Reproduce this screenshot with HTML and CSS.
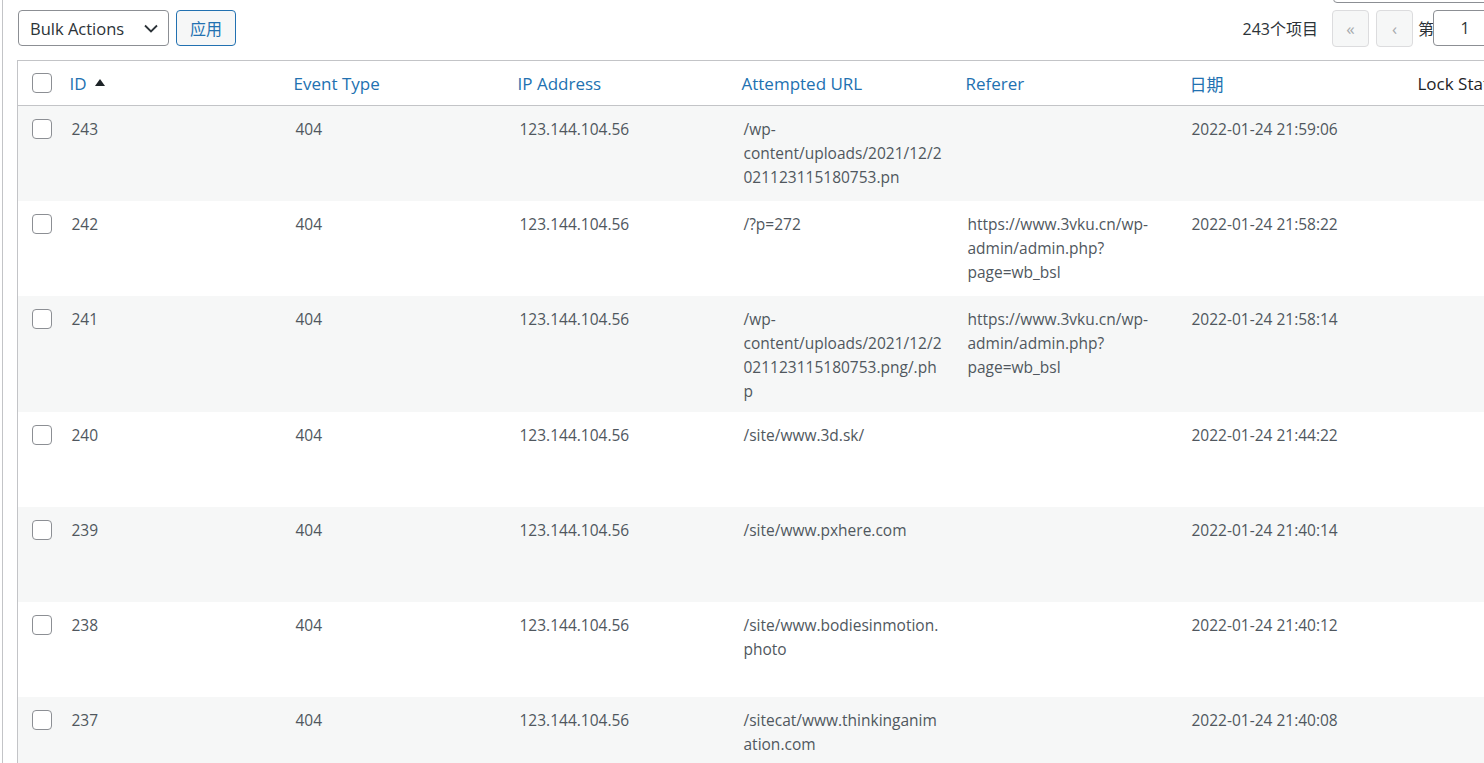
FILE: index.html
```html
<!DOCTYPE html>
<html>
<head>
<meta charset="utf-8">
<title>Security Log</title>
<link rel="stylesheet" href="styles.css">
</head>
<body>
<div class="wrap">

<div class="search-row">
  <div class="search-box"></div>
</div>

<div class="tablenav">
  <div class="bulkactions">
    <div class="select">Bulk Actions
      <svg width="14" height="9" viewBox="0 0 14 9"><path d="M1 1.5 L7 7.5 L13 1.5" fill="none" stroke="#2c3338" stroke-width="1.8"/></svg>
    </div>
    <button class="button">应用</button>
  </div>
  <div class="pages">
    <span class="count">243个项目</span>
    <span class="pbtn">&laquo;</span>
    <span class="pbtn">&lsaquo;</span>
    <span class="of">第</span>
    <span class="current">1</span>
  </div>
</div>

<table class="logs">
  <colgroup>
    <col class="c-check">
    <col class="c-col"><col class="c-col"><col class="c-col">
    <col class="c-col"><col class="c-col"><col class="c-col">
    <col class="c-last">
  </colgroup>
  <thead>
    <tr>
      <th class="check"><span class="cb"></span></th>
      <th class="sortable"><a>ID</a><span class="arrow"></span></th>
      <th class="sortable"><a>Event Type</a></th>
      <th class="sortable"><a>IP Address</a></th>
      <th class="sortable"><a>Attempted URL</a></th>
      <th class="sortable"><a>Referer</a></th>
      <th class="sortable"><a>日期</a></th>
      <th class="plain">Lock Status</th>
    </tr>
  </thead>
  <tbody>
    <tr class="alt">
      <td class="check"><span class="cb"></span></td>
      <td>243</td><td>404</td><td>123.144.104.56</td>
      <td class="url">/wp-content/uploads/2021/12/2021123115180753.pn</td>
      <td class="url"></td>
      <td>2022-01-24 21:59:06</td><td></td>
    </tr>
    <tr>
      <td class="check"><span class="cb"></span></td>
      <td>242</td><td>404</td><td>123.144.104.56</td>
      <td class="url">/?p=272</td>
      <td class="url">https://www.3vku.cn/wp-admin/admin.php?page=wb_bsl</td>
      <td>2022-01-24 21:58:22</td><td></td>
    </tr>
    <tr class="alt">
      <td class="check"><span class="cb"></span></td>
      <td>241</td><td>404</td><td>123.144.104.56</td>
      <td class="url">/wp-content/uploads/2021/12/2021123115180753.png/.php</td>
      <td class="url">https://www.3vku.cn/wp-admin/admin.php?page=wb_bsl</td>
      <td>2022-01-24 21:58:14</td><td></td>
    </tr>
    <tr>
      <td class="check"><span class="cb"></span></td>
      <td>240</td><td>404</td><td>123.144.104.56</td>
      <td class="url">/site/www.3d.sk/</td>
      <td class="url"></td>
      <td>2022-01-24 21:44:22</td><td></td>
    </tr>
    <tr class="alt">
      <td class="check"><span class="cb"></span></td>
      <td>239</td><td>404</td><td>123.144.104.56</td>
      <td class="url">/site/www.pxhere.com</td>
      <td class="url"></td>
      <td>2022-01-24 21:40:14</td><td></td>
    </tr>
    <tr>
      <td class="check"><span class="cb"></span></td>
      <td>238</td><td>404</td><td>123.144.104.56</td>
      <td class="url">/site/www.bodiesinmotion.photo</td>
      <td class="url"></td>
      <td>2022-01-24 21:40:12</td><td></td>
    </tr>
    <tr class="alt">
      <td class="check"><span class="cb"></span></td>
      <td>237</td><td>404</td><td>123.144.104.56</td>
      <td class="url">/sitecat/www.thinkinganimation.com</td>
      <td class="url"></td>
      <td>2022-01-24 21:40:08</td><td></td>
    </tr>
  </tbody>
</table>

</div>
</body>
</html>
```

FILE: styles.css
```css
html, body {
  margin: 0;
  padding: 0;
  background: #fff;
  overflow: hidden;
}
body {
  font-family: "Open Sans", "Noto Sans CJK SC", sans-serif;
  color: #50575e;
}
.wrap {
  width: 1600px;
  margin-left: 2px;
  border-left: 1px solid #c3c4c7;
  padding-left: 14px;
  min-height: 800px;
}
.search-row {
  width: 1480px;
  height: 10px;
  display: flex;
  justify-content: flex-end;
}
.search-box {
  width: 162px;
  height: 34px;
  margin-top: -33px;
  border: 1px solid #8c8f94;
  border-radius: 4px;
}
.tablenav {
  width: 1480px;
  display: flex;
  justify-content: space-between;
  align-items: center;
  height: 36px;
  margin-bottom: 14px;
}
.bulkactions {
  display: flex;
  gap: 7px;
  margin-left: 1px;
}
.select {
  box-sizing: border-box;
  width: 151px;
  height: 36px;
  border: 1px solid #8c8f94;
  border-radius: 4px;
  padding: 0 10px 0 11px;
  display: flex;
  align-items: center;
  justify-content: space-between;
  font-size: 16.5px;
  color: #2c3338;
}
.button {
  box-sizing: border-box;
  height: 36px;
  width: 60px;
  border: 1px solid #2271b1;
  border-radius: 4px;
  background: #f6f7f7;
  color: #2271b1;
  font-family: "Noto Sans CJK SC", sans-serif;
  font-size: 16px;
  padding: 0;
}
.pages {
  display: flex;
  align-items: center;
  font-size: 16px;
  color: #2c3338;
}
.count {
  font-family: "Open Sans", "Noto Sans CJK SC", sans-serif;
  margin-right: 14px;
}
.pbtn {
  box-sizing: border-box;
  width: 37px;
  height: 37px;
  border: 1px solid #dcdcde;
  border-radius: 4px;
  background: #f6f7f7;
  color: #a7aaad;
  display: flex;
  align-items: center;
  justify-content: center;
  margin-right: 7px;
  font-size: 17px;
}
.pbtn + .pbtn {
  margin-right: 5px;
}
.of {
  font-family: "Noto Sans CJK SC", sans-serif;
}
.current {
  box-sizing: border-box;
  width: 64px;
  height: 36px;
  margin-left: -1px;
  border: 1px solid #8c8f94;
  border-radius: 4px;
  display: flex;
  align-items: center;
  justify-content: center;
  color: #2c3338;
  font-size: 16px;
}
table.logs {
  table-layout: fixed;
  width: 1560px;
  border-collapse: collapse;
  border: 1px solid #c3c4c7;
}
col.c-check { width: 42px; }
col.c-col { width: 224px; }
col.c-last { width: 174px; }
thead th {
  text-align: left;
  font-weight: normal;
  font-size: 17px;
  height: 44px;
  padding: 0 10px;
  border-bottom: 1px solid #c3c4c7;
  color: #1d2327;
  white-space: nowrap;
}
thead th.plain {
  padding-left: 14px;
}
thead th a {
  color: #2271b1;
}
.arrow {
  display: inline-block;
  width: 0;
  height: 0;
  margin-left: 8px;
  vertical-align: 4px;
  border-left: 5px solid transparent;
  border-right: 5px solid transparent;
  border-bottom: 7px solid #1d2327;
}
tbody tr {
  height: 95px;
}
tbody tr.alt {
  background: #f6f7f7;
}
tbody td {
  vertical-align: top;
  padding: 11px 12px 9px;
  font-size: 15.5px;
  line-height: 24px;
  overflow-wrap: break-word;
}
th.check, td.check {
  padding: 0 0 0 14px;
}
td.check {
  padding-top: 13px;
}
.cb {
  display: block;
  box-sizing: border-box;
  width: 20px;
  height: 20px;
  border: 1px solid #8c8f94;
  border-radius: 4px;
  background: #fff;
}
```
